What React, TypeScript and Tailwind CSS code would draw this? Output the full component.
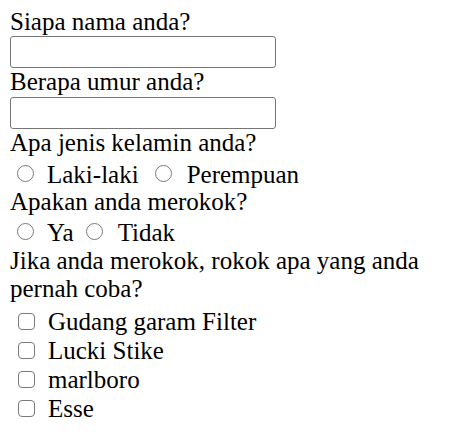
const Radio = ({ className = "" }: { className?: string }) => (
  <span className={`flex-none box-border inline-block w-[17px] h-[17px] rounded-full border-[1.5px] border-[#7a7a7a] bg-white ${className}`} />
);

const Check = () => (
  <span className="flex-none box-border inline-block w-[17px] h-[17px] rounded-[4px] border-[1.5px] border-[#7a7a7a] bg-white ml-[8px] mr-[13px]" />
);

const cigarettes = ["Gudang garam Filter", "Lucki Stike", "marlboro", "Esse"];

export default function App() {
  return (
    <div className="min-h-[441px] bg-white pl-[10px] pt-[8px] text-black text-[25px] font-['Liberation_Serif','Times_New_Roman',serif]">
      <div className="leading-[27px]">Siapa nama anda?</div>
      <div className="mt-[1px] w-[266px] h-[32px] rounded-[3px] border border-[#767676] bg-white" />
      <div className="leading-[27px]">Berapa umur anda?</div>
      <div className="mt-[2px] w-[266px] h-[32px] rounded-[3px] border border-[#767676] bg-white" />

      <div className="leading-[27px]">Apa jenis kelamin anda?</div>
      <div className="mt-[5px] leading-[27px] flex items-end">
        <Radio className="ml-[7px] mr-[13px] mb-[6px]" />
        <span>Laki-laki</span>
        <Radio className="ml-[16px] mr-[15px] mb-[6px]" />
        <span>Perempuan</span>
      </div>

      <div className="leading-[27px]">Apakan anda merokok?</div>
      <div className="mt-[4px] leading-[27px] flex items-end">
        <Radio className="ml-[7px] mr-[13px] mb-[6px]" />
        <span>Ya</span>
        <Radio className="ml-[12px] mr-[15px] mb-[6px]" />
        <span>Tidak</span>
      </div>

      <div className="mt-[1px] leading-[28px] w-[425px]">
        Jika anda merokok, rokok apa yang anda pernah coba?
      </div>
      <div className="mt-[4px]">
        {cigarettes.map((c) => (
          <div key={c} className="leading-[29px] flex items-end">
            <span className="mb-[6px] flex">
              <Check />
            </span>
            <span>{c}</span>
          </div>
        ))}
      </div>
    </div>
  );
}
